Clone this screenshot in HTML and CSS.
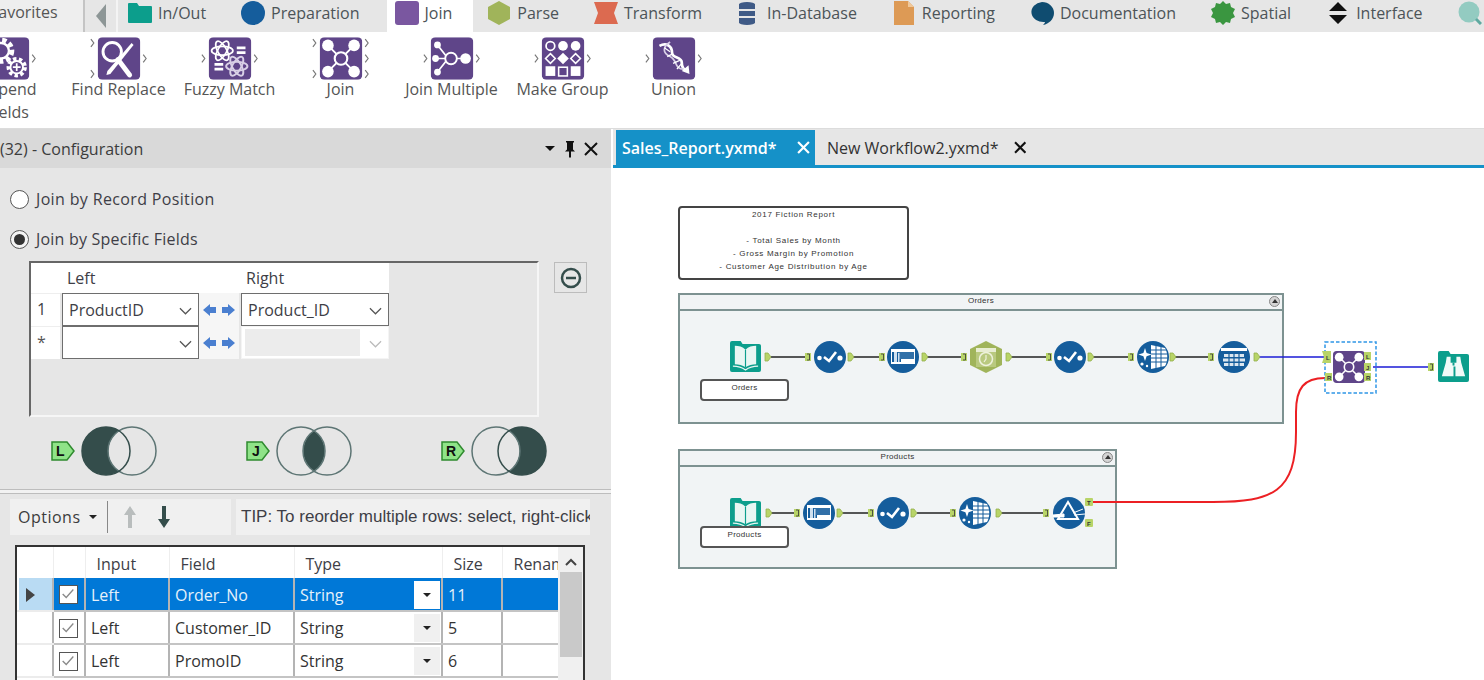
FILE: index.html
```html
<!DOCTYPE html>
<html lang="en">
<head>
    <meta charset="UTF-8">
    <title>Sales_Report.yxmd - Alteryx Designer</title>
    <link rel="stylesheet" href="styles.css">
</head>
<body>
    <svg class="defs" xmlns="http://www.w3.org/2000/svg">
        <!-- ribbon tools: 42x43 purple tiles -->
        <symbol id="tile-append" viewBox="0 0 44 44">
            <rect width="44" height="44" rx="5" fill="#5f4589"/>
            <circle cx="15" cy="14" r="11" fill="none" stroke="#fff" stroke-width="5" stroke-dasharray="4.500 3"/>
            <circle cx="15" cy="14" r="8" fill="none" stroke="#fff" stroke-width="2.500"/>
            <circle cx="31" cy="31" r="8.500" fill="none" stroke="#fff" stroke-width="4" stroke-dasharray="3.500 2.500"/>
            <circle cx="31" cy="31" r="6.500" fill="#5f4589" stroke="#fff" stroke-width="2"/>
            <path d="M31 27v8M27 31h8" stroke="#fff" stroke-width="1.800"/>
        </symbol>
        <symbol id="tile-find" viewBox="0 0 44 44">
            <rect width="44" height="44" rx="5" fill="#5f4589"/>
            <circle cx="15" cy="15" r="9.500" fill="none" stroke="#fff" stroke-width="3"/>
            <path d="M21 23l12 16" stroke="#fff" stroke-width="5" stroke-linecap="round"/>
            <path d="M35 6l2 2-24 30-4 1 1-4z" fill="#fff"/>
        </symbol>
        <symbol id="tile-fuzzy" viewBox="0 0 44 44">
            <rect width="44" height="44" rx="5" fill="#5f4589"/>
            <g fill="none" stroke="#fff" stroke-width="1.800">
                <ellipse cx="14" cy="14" rx="11" ry="4.500"/>
                <ellipse cx="14" cy="14" rx="11" ry="4.500" transform="rotate(60 14 14)"/>
                <ellipse cx="14" cy="14" rx="11" ry="4.500" transform="rotate(120 14 14)"/>
            </g>
            <g fill="none" stroke="#d8cfe6" stroke-width="2">
                <ellipse cx="29" cy="30" rx="11" ry="4.500"/>
                <ellipse cx="29" cy="30" rx="11" ry="4.500" transform="rotate(60 29 30)"/>
                <ellipse cx="29" cy="30" rx="11" ry="4.500" transform="rotate(120 29 30)"/>
            </g>
            <path d="M29 11h9M29 16h9M6 28h9M6 33h9" stroke="#fff" stroke-width="2.800"/>
        </symbol>
        <symbol id="tile-join" viewBox="0 0 44 44">
            <rect width="44" height="44" rx="5" fill="#5f4589"/>
            <path d="M9 9l26 26M35 9L9 35" stroke="#fff" stroke-width="2"/>
            <circle cx="22" cy="22" r="6.500" fill="#5f4589" stroke="#fff" stroke-width="2.200"/>
            <circle cx="8.500" cy="8.500" r="6" fill="#fff"/>
            <circle cx="35.500" cy="8.500" r="6" fill="#fff"/>
            <circle cx="8.500" cy="35.500" r="6" fill="#fff"/>
            <circle cx="35.500" cy="35.500" r="6" fill="#fff"/>
        </symbol>
        <symbol id="tile-multi" viewBox="0 0 44 44">
            <rect width="44" height="44" rx="5" fill="#5f4589"/>
            <path d="M7 8l11 14M5 22h13M7 36l11-14M27 22h7" stroke="#fff" stroke-width="1.800"/>
            <circle cx="7" cy="8" r="3.500" fill="#fff"/>
            <circle cx="5" cy="22" r="3.500" fill="#fff"/>
            <circle cx="7" cy="36" r="3.500" fill="#fff"/>
            <circle cx="21" cy="22" r="6" fill="#5f4589" stroke="#fff" stroke-width="2"/>
            <circle cx="36" cy="22" r="5.500" fill="#fff"/>
        </symbol>
        <symbol id="tile-group" viewBox="0 0 44 44">
            <rect width="44" height="44" rx="5" fill="#5f4589"/>
            <circle cx="9" cy="9" r="4.500" fill="none" stroke="#fff" stroke-width="1.800"/>
            <circle cx="22" cy="9" r="5" fill="#fff"/>
            <circle cx="35" cy="9" r="5" fill="#fff"/>
            <path d="M9 17l5 5-5 5-5-5z" fill="none" stroke="#fff" stroke-width="1.600"/>
            <path d="M22 16l6 6-6 6-6-6z" fill="#fff"/>
            <path d="M35 17l5 5-5 5-5-5z" fill="none" stroke="#fff" stroke-width="1.600"/>
            <rect x="4" y="30" width="10" height="10" fill="#fff"/>
            <rect x="17.500" y="31" width="9" height="9" fill="none" stroke="#fff" stroke-width="1.600"/>
            <rect x="30" y="30" width="10" height="10" fill="#fff"/>
        </symbol>
        <symbol id="tile-union" viewBox="0 0 44 44">
            <rect width="44" height="44" rx="5" fill="#5f4589"/>
            <path d="M7 9c8-4 13 1 13 7s10 4 10 10 3 8 5 9" fill="none" stroke="#fff" stroke-width="2.800"/>
            <path d="M18 5c-8 5-8 11 0 15s4 13 14 13" fill="none" stroke="#d8cfe6" stroke-width="1.800"/>
            <path d="M12 11l6 4M15 20l6-3M21 27l7-3M25 33l5-6" stroke="#fff" stroke-width="1.300"/>
            <path d="M38 38l-1-9-7 6z" fill="#fff"/>
        </symbol>

        <!-- workflow tools, 32px -->
        <symbol id="wf-book" viewBox="0 0 32 32">
            <path d="M2 0h9l2 3h17a2 2 0 0 1 2 2v25a2 2 0 0 1-2 2H2a2 2 0 0 1-2-2V2a2 2 0 0 1 2-2z" fill="#0c9e8c"/>
            <path d="M16 9C13 6 9 5 5 5v19c4 0 8 1 11 3 3-2 7-3 11-3V5c-4 0-8 1-11 4z" fill="#e8f6f3"/>
            <path d="M16 9v18" stroke="#0c9e8c" stroke-width="1.200"/>
            <path d="M3 26c4 0 9 1 13 4 4-3 9-4 13-4" fill="none" stroke="#e8f6f3" stroke-width="1.200"/>
        </symbol>
        <symbol id="wf-select" viewBox="0 0 32 32">
            <circle cx="16" cy="16" r="16" fill="#155d9c"/>
            <circle cx="5.500" cy="17" r="2.300" fill="#fff"/>
            <path d="M10 16l5 4 7-9" fill="none" stroke="#fff" stroke-width="2.600"/>
            <circle cx="26" cy="17" r="2.600" fill="#fff"/>
        </symbol>
        <symbol id="wf-formula" viewBox="0 0 32 32">
            <circle cx="16" cy="16" r="16" fill="#155d9c"/>
            <rect x="4" y="8" width="24" height="15" fill="#fff"/>
            <rect x="5" y="11" width="22" height="10" fill="#155d9c"/>
            <rect x="11" y="11" width="16" height="7" fill="#fff" opacity=".12"/>
            <path d="M7 21V11h3v10zM11 21v-9h1.500v9z" fill="#cfe0ef"/>
            <path d="M14 18h13v3H14z" fill="#fff"/>
        </symbol>
        <symbol id="wf-date" viewBox="0 0 32 32">
            <path d="M16 0l16 8v16l-16 8-16-8V8z" fill="#a0b45a"/>
            <rect x="6" y="7" width="20" height="4" fill="#e8edd2"/>
            <rect x="6" y="11" width="20" height="15" fill="#b9c97f"/>
            <circle cx="16" cy="18" r="6.500" fill="none" stroke="#eef2dc" stroke-width="1.500"/>
            <path d="M16 14v4l-2 3" fill="none" stroke="#eef2dc" stroke-width="1.200"/>
        </symbol>
        <symbol id="wf-multi" viewBox="0 0 32 32">
            <circle cx="16" cy="16" r="16" fill="#155d9c"/>
            <path d="M14 4l14 3c3 5 3 13 0 18l-14 3z" fill="#fff"/>
            <path d="M14 9h16M14 13h17M14 17h17M14 21h16M19 5v23M24 6v21" stroke="#155d9c" stroke-width="1"/>
            <path d="M8 7l1.600 5 5 1.600-5 1.600L8 20l-1.600-4.800-5-1.600 5-1.600z" fill="#fff"/>
            <circle cx="5" cy="23" r="1.600" fill="#fff"/>
            <circle cx="10" cy="25" r="1.200" fill="#fff"/>
        </symbol>
        <symbol id="wf-grid" viewBox="0 0 32 32">
            <circle cx="16" cy="16" r="16" fill="#155d9c"/>
            <rect x="3" y="7" width="26" height="3" fill="#fff"/>
            <path d="M6 13h20v3H6zM5 17.500h22v3H5zM6 22h20v3H6z" fill="#fff" opacity=".85"/>
            <path d="M11 12v14M16 12v14M21 12v14" stroke="#155d9c" stroke-width="1.200"/>
        </symbol>
        <symbol id="wf-filter" viewBox="0 0 32 32">
            <circle cx="16" cy="16" r="16" fill="#155d9c"/>
            <path d="M15 5l10 17H5z" fill="none" stroke="#fff" stroke-width="2"/>
            <path d="M0 18l11-1v3H0zM20 16l10-4M21 18l11-1" stroke="#fff" fill="#fff" stroke-width="1"/>
        </symbol>
        <symbol id="wf-browse" viewBox="0 0 32 32">
            <path d="M2 0h9l2 3h17a2 2 0 0 1 2 2v25a2 2 0 0 1-2 2H2a2 2 0 0 1-2-2V2a2 2 0 0 1 2-2z" fill="#0c9e8c"/>
            <path d="M9 6h4v6h6V6h4l1 6 4 14h-10V16h-2v10H4l4-14z" fill="#f1faf8"/>
            <path d="M15 12h2v3h-2z" fill="#0c9e8c"/>
        </symbol>
    </svg>

    <nav class="cat-bar">
        <div class="fav">Favorites</div>
        <div class="cat-back"><span class="back-arrow"></span></div>
        <div class="cats">
            <div class="cat">
                <svg class="cat-icon" viewBox="0 0 24 24"><path d="M1 2h8l2 3h12a1 1 0 0 1 1 1v15a1 1 0 0 1-1 1H1a1 1 0 0 1-1-1V3a1 1 0 0 1 1-1z" fill="#0c9e8c"/></svg>
                <span>In/Out</span>
            </div>
            <div class="cat">
                <svg class="cat-icon" viewBox="0 0 24 24"><circle cx="12" cy="12" r="12" fill="#155d9c"/></svg>
                <span>Preparation</span>
            </div>
            <div class="cat cat-active">
                <svg class="cat-icon" viewBox="0 0 24 24"><rect width="24" height="24" rx="3" fill="#7a57a0"/></svg>
                <span>Join</span>
            </div>
            <div class="cat">
                <svg class="cat-icon" viewBox="0 0 24 24"><path d="M12 0l11 6v12l-11 6-11-6V6z" fill="#a0b45a"/></svg>
                <span>Parse</span>
            </div>
            <div class="cat">
                <svg class="cat-icon" viewBox="0 0 24 24"><path d="M0 1h24l-4 11 4 11H0l4-11z" fill="#dc6a50"/></svg>
                <span>Transform</span>
            </div>
            <div class="cat">
                <svg class="cat-icon" viewBox="0 0 24 24"><path d="M2 3h16v5H2zM2 10h16v5H2zM2 17h16v5H2z" fill="#3f5a86"/><ellipse cx="10" cy="3.500" rx="8" ry="2.500" fill="#3f5a86"/><ellipse cx="10" cy="21.500" rx="8" ry="2.500" fill="#3f5a86"/></svg>
                <span>In-Database</span>
            </div>
            <div class="cat">
                <svg class="cat-icon" viewBox="0 0 24 24"><path d="M2 0h14l6 6v18H2z" fill="#dd9a55"/><path d="M16 0v6h6z" fill="#f0c89a"/></svg>
                <span>Reporting</span>
            </div>
            <div class="cat">
                <svg class="cat-icon" viewBox="0 0 24 24"><path d="M12 1a12 11 0 0 1 12 11c0 6-5 11-11 12 2-2 2-3 2-3A12 10 0 1 1 12 1z" fill="#0f4c70"/></svg>
                <span>Documentation</span>
            </div>
            <div class="cat">
                <svg class="cat-icon" viewBox="0 0 24 24"><path d="M12 0l3 3 4-1 1 4 4 2-2 4 2 4-4 2-1 4-4-1-3 3-3-3-4 1-1-4-4-2 2-4-2-4 4-2 1-4 4 1z" fill="#3a9640"/></svg>
                <span>Spatial</span>
            </div>
            <div class="cat">
                <svg class="cat-icon" viewBox="0 0 24 24"><path d="M12 1l9 9H3zM3 14h18l-9 9z" fill="#111"/></svg>
                <span>Interface</span>
            </div>
            <div class="cat">
                <svg class="cat-icon" viewBox="0 0 24 24"><circle cx="11" cy="11" r="10.500" fill="#93cbc1"/><path d="M18 18l5 5" stroke="#5fa9a0" stroke-width="3"/></svg>
            </div>
        </div>
    </nav>

    <section class="ribbon">
        <div class="tool">
            <svg class="tool-svg" viewBox="-10 0 64 44"><use href="#tile-append" width="44" height="44"/><path class="chev" d="M47 18l3 4-3 4"/></svg>
            <span class="tool-label">Append Fields</span>
        </div>
        <div class="tool">
            <svg class="tool-svg" viewBox="-10 0 64 44"><use href="#tile-find" width="44" height="44"/><path class="chev" d="M-7 2l3 4-3 4M-7 34l3 4-3 4M47 18l3 4-3 4"/></svg>
            <span class="tool-label">Find Replace</span>
        </div>
        <div class="tool">
            <svg class="tool-svg" viewBox="-10 0 64 44"><use href="#tile-fuzzy" width="44" height="44"/><path class="chev" d="M-7 18l3 4-3 4M47 18l3 4-3 4"/></svg>
            <span class="tool-label">Fuzzy Match</span>
        </div>
        <div class="tool">
            <svg class="tool-svg" viewBox="-10 0 64 44"><use href="#tile-join" width="44" height="44"/><path class="chev" d="M-7 2l3 4-3 4M-7 34l3 4-3 4M47 2l3 4-3 4M47 18l3 4-3 4M47 34l3 4-3 4"/></svg>
            <span class="tool-label">Join</span>
        </div>
        <div class="tool">
            <svg class="tool-svg" viewBox="-10 0 64 44"><use href="#tile-multi" width="44" height="44"/><path class="chev" d="M-7 18l3 4-3 4M47 18l3 4-3 4"/></svg>
            <span class="tool-label">Join Multiple</span>
        </div>
        <div class="tool">
            <svg class="tool-svg" viewBox="-10 0 64 44"><use href="#tile-group" width="44" height="44"/><path class="chev" d="M-7 18l3 4-3 4M47 18l3 4-3 4"/></svg>
            <span class="tool-label">Make Group</span>
        </div>
        <div class="tool">
            <svg class="tool-svg" viewBox="-10 0 64 44"><use href="#tile-union" width="44" height="44"/><path class="chev" d="M-7 18l3 4-3 4M47 18l3 4-3 4"/></svg>
            <span class="tool-label">Union</span>
        </div>
    </section>

    <main class="main">
        <aside class="config">
            <header class="config-head">
                <span class="config-title">(32) - Configuration</span>
                <svg class="config-ctrls" viewBox="0 0 54 18">
                    <path d="M0 6h10l-5 5z" fill="#111"/>
                    <path d="M21 1h8v1.500h-1v7l2 2h-4v6h-2v-6h-4l2-2v-7h-1z" fill="#111"/>
                    <path d="M40 3l12 12M52 3L40 15" stroke="#111" stroke-width="2"/>
                </svg>
            </header>

            <label class="radio radio-first"><span class="radio-dot"></span>Join by Record Position</label>
            <label class="radio radio-next"><span class="radio-dot radio-on"></span>Join by Specific Fields</label>

            <div class="fields-row">
                <div class="join-box">
                    <div class="join-grid">
                        <div class="jg-cell"></div>
                        <div class="jg-cell jg-head">Left</div>
                        <div class="jg-cell"></div>
                        <div class="jg-cell jg-head">Right</div>

                        <div class="jg-num">1</div>
                        <div class="select">ProductID<svg class="chevron" viewBox="0 0 14 8"><path d="M1 1l6 6 6-6"/></svg></div>
                        <div class="swap"><svg class="swap-icon" viewBox="0 0 32 14"><path d="M0 7l7-6v3h6v6H7v3zM32 7l-7-6v3h-6v6h6v3z" fill="#4a7fd0"/></svg></div>
                        <div class="select">Product_ID<svg class="chevron" viewBox="0 0 14 8"><path d="M1 1l6 6 6-6"/></svg></div>

                        <div class="jg-num jg-star">*</div>
                        <div class="select"><svg class="chevron" viewBox="0 0 14 8"><path d="M1 1l6 6 6-6"/></svg></div>
                        <div class="swap"><svg class="swap-icon" viewBox="0 0 32 14"><path d="M0 7l7-6v3h6v6H7v3zM32 7l-7-6v3h-6v6h6v3z" fill="#4a7fd0"/></svg></div>
                        <div class="select select-off"><span class="select-fill"></span><svg class="chevron" viewBox="0 0 14 8"><path d="M1 1l6 6 6-6"/></svg></div>
                    </div>
                </div>
                <button class="minus-btn"><svg class="minus-icon" viewBox="0 0 22 22"><circle cx="11" cy="11" r="9" fill="none" stroke="#344d4b" stroke-width="2.500"/><path d="M6 11h10" stroke="#344d4b" stroke-width="2.500"/></svg></button>
            </div>

            <div class="venn-row">
                <div class="venn">
                    <svg class="tag" viewBox="0 0 24 20"><path d="M1 1h15l7 9-7 9H1z" fill="#8fe388" stroke="#2f8a2f" stroke-width="1.500"/><text class="tag-text" x="5" y="15">L</text></svg>
                    <svg class="venn-svg" viewBox="0 0 76 50">
                        <path d="M25 1a24 24 0 0 1 13 4 24 24 0 0 0 0 40 24 24 0 0 1-13 4 24 24 0 0 1 0-48z" fill="#344d4b"/>
                        <circle cx="51" cy="25" r="24" fill="none" stroke="#5d7574" stroke-width="1.500"/>
                        <circle cx="25" cy="25" r="24" fill="none" stroke="#344d4b" stroke-width="1.500"/>
                    </svg>
                </div>
                <div class="venn">
                    <svg class="tag" viewBox="0 0 24 20"><path d="M1 1h15l7 9-7 9H1z" fill="#8fe388" stroke="#2f8a2f" stroke-width="1.500"/><text class="tag-text" x="6" y="15">J</text></svg>
                    <svg class="venn-svg" viewBox="0 0 76 50">
                        <path d="M38 5a24 24 0 0 1 0 40 24 24 0 0 1 0-40z" fill="#344d4b"/>
                        <circle cx="25" cy="25" r="24" fill="none" stroke="#5d7574" stroke-width="1.500"/>
                        <circle cx="51" cy="25" r="24" fill="none" stroke="#5d7574" stroke-width="1.500"/>
                    </svg>
                </div>
                <div class="venn">
                    <svg class="tag" viewBox="0 0 24 20"><path d="M1 1h15l7 9-7 9H1z" fill="#8fe388" stroke="#2f8a2f" stroke-width="1.500"/><text class="tag-text" x="5" y="15">R</text></svg>
                    <svg class="venn-svg" viewBox="0 0 76 50">
                        <path d="M51 1a24 24 0 0 0-13 4 24 24 0 0 1 0 40 24 24 0 0 0 13 4 24 24 0 0 0 0-48z" fill="#344d4b"/>
                        <circle cx="25" cy="25" r="24" fill="none" stroke="#5d7574" stroke-width="1.500"/>
                        <circle cx="51" cy="25" r="24" fill="none" stroke="#344d4b" stroke-width="1.500"/>
                    </svg>
                </div>
            </div>

            <div class="split-line"></div>

            <div class="toolbar-row">
                <div class="toolbar">
                    <span class="options">Options</span>
                    <span class="caret"></span>
                    <span class="tb-sep"></span>
                    <svg class="tb-arrow" viewBox="0 0 14 24"><path d="M7 1l6 9H9v13H5V10H1z" fill="#b9bdbd"/></svg>
                    <svg class="tb-arrow" viewBox="0 0 14 24"><path d="M5 1h4v13h4l-6 9-6-9h4z" fill="#344d4b"/></svg>
                </div>
                <div class="tip">TIP: To reorder multiple rows: select, right-click</div>
            </div>

            <div class="fields-wrap">
                <table class="fields">
                    <colgroup>
                        <col class="c-head"><col class="c-check"><col class="c-input"><col class="c-field"><col class="c-type"><col class="c-size"><col class="c-rename">
                    </colgroup>
                    <thead>
                        <tr><th></th><th></th><th>Input</th><th>Field</th><th>Type</th><th>Size</th><th>Rename</th></tr>
                    </thead>
                    <tbody>
                        <tr class="row-sel">
                            <td class="row-head"><span class="row-arrow"></span></td>
                            <td><span class="check"><svg viewBox="0 0 18 18"><path d="M3 9l4 4 8-9" fill="none" stroke="#8a8a8a" stroke-width="1.500"/></svg></span></td>
                            <td>Left</td><td>Order_No</td>
                            <td><div class="type-cell">String<span class="type-drop"><i class="caret"></i></span></div></td>
                            <td>11</td><td></td>
                        </tr>
                        <tr>
                            <td class="row-head"></td>
                            <td><span class="check"><svg viewBox="0 0 18 18"><path d="M3 9l4 4 8-9" fill="none" stroke="#8a8a8a" stroke-width="1.500"/></svg></span></td>
                            <td>Left</td><td>Customer_ID</td>
                            <td><div class="type-cell">String<span class="type-drop"><i class="caret"></i></span></div></td>
                            <td>5</td><td></td>
                        </tr>
                        <tr>
                            <td class="row-head"></td>
                            <td><span class="check"><svg viewBox="0 0 18 18"><path d="M3 9l4 4 8-9" fill="none" stroke="#8a8a8a" stroke-width="1.500"/></svg></span></td>
                            <td>Left</td><td>PromoID</td>
                            <td><div class="type-cell">String<span class="type-drop"><i class="caret"></i></span></div></td>
                            <td>6</td><td></td>
                        </tr>
                    </tbody>
                </table>
                <div class="scroll">
                    <svg class="scroll-up" viewBox="0 0 12 8"><path d="M1 7l5-5 5 5" fill="none" stroke="#444" stroke-width="2"/></svg>
                    <div class="scroll-thumb"></div>
                </div>
            </div>
        </aside>

        <section class="work">
            <div class="doc-tabs">
                <div class="doc-tab doc-active">
                    <span>Sales_Report.yxmd*</span>
                    <svg class="doc-x" viewBox="0 0 12 12"><path d="M1 1l10 10M11 1L1 11" stroke="#fff" stroke-width="2"/></svg>
                </div>
                <div class="doc-tab">
                    <span>New Workflow2.yxmd*</span>
                    <svg class="doc-x" viewBox="0 0 12 12"><path d="M1 1l10 10M11 1L1 11" stroke="#111" stroke-width="2"/></svg>
                </div>
            </div>

            <div class="canvas">
                <div class="comment">
                    <p>2017 Fiction Report</p>
                    <p class="comment-gap">- Total Sales by Month</p>
                    <p>- Gross Margin by Promotion</p>
                    <p>- Customer Age Distribution by Age</p>
                </div>

                <div class="box box-orders">
                    <div class="box-head">Orders<span class="collapse"></span></div>
                </div>
                <div class="box box-products">
                    <div class="box-head">Products<span class="collapse"></span></div>
                </div>

                <div class="node-label label-orders">Orders</div>
                <div class="node-label label-products">Products</div>

                <!-- viewBox uses page coordinates -->
                <svg class="flow" viewBox="613 168 871 512">
                    <defs>
                        <path id="out-a" d="M0-4h3l3 4-3 4H0z" fill="#b8d468" stroke="#94b04c" stroke-width=".8"/>
                        <g id="in-a"><path d="M0-4h6v8H0z" fill="#b8d468"/><path d="M2-3h2.500v6H2" fill="none" stroke="#333" stroke-width=".8"/></g>
                    </defs>

                    <g class="wire">
                        <path d="M771 357h34M853 357h26M927 357h34M1011 357h35M1093 357h35M1175 357h33"/>
                        <path d="M771 513h23M842 513h26M917 513h33M1001 513h42"/>
                    </g>
                    <path class="wire-blue" d="M1259 357h65M1373 367h55"/>
                    <path class="wire-red" d="M1093 502h120c60 0 83-10 83-70v-20c0-24 8-34 29-34"/>

                    <use href="#wf-book" x="730" y="341" width="31" height="31"/>
                    <use href="#wf-select" x="814" y="341" width="32" height="32"/>
                    <use href="#wf-formula" x="887" y="341" width="32" height="32"/>
                    <use href="#wf-date" x="970" y="341" width="32" height="32"/>
                    <use href="#wf-select" x="1054" y="341" width="32" height="32"/>
                    <use href="#wf-multi" x="1137" y="341" width="32" height="32"/>
                    <use href="#wf-grid" x="1218" y="341" width="32" height="32"/>

                    <use href="#wf-book" x="730" y="498" width="31" height="31"/>
                    <use href="#wf-formula" x="803" y="497" width="32" height="32"/>
                    <use href="#wf-select" x="877" y="497" width="32" height="32"/>
                    <use href="#wf-multi" x="959" y="497" width="32" height="32"/>
                    <use href="#wf-filter" x="1053" y="497" width="32" height="32"/>

                    <use href="#out-a" x="765" y="357"/><use href="#in-a" x="805" y="357"/>
                    <use href="#out-a" x="848" y="357"/><use href="#in-a" x="879" y="357"/>
                    <use href="#out-a" x="922" y="357"/><use href="#in-a" x="961" y="357"/>
                    <use href="#out-a" x="1006" y="357"/><use href="#in-a" x="1046" y="357"/>
                    <use href="#out-a" x="1088" y="357"/><use href="#in-a" x="1128" y="357"/>
                    <use href="#out-a" x="1170" y="357"/><use href="#in-a" x="1208" y="357"/>
                    <use href="#out-a" x="1254" y="357"/>

                    <use href="#out-a" x="766" y="513"/><use href="#in-a" x="794" y="513"/>
                    <use href="#out-a" x="837" y="513"/><use href="#in-a" x="868" y="513"/>
                    <use href="#out-a" x="911" y="513"/><use href="#in-a" x="950" y="513"/>
                    <use href="#out-a" x="996" y="513"/><use href="#in-a" x="1043" y="513"/>

                    <g class="mini-anchor">
                        <rect x="1085" y="498" width="8" height="8" rx="1"/><text x="1087" y="504.500">T</text>
                        <rect x="1085" y="519" width="8" height="8" rx="1"/><text x="1087" y="525.500">F</text>
                    </g>

                    <!-- selected join -->
                    <rect class="select-dash" x="1325" y="342" width="51" height="51"/>
                    <use href="#tile-join" x="1333" y="351" width="32" height="32"/>
                    <g class="mini-anchor">
                        <path d="M1322 351h9v12h-9l2-6z"/><text x="1326" y="360">L</text>
                        <rect x="1325" y="373" width="7" height="8"/><text x="1327" y="379.500">R</text>
                        <rect x="1364" y="352" width="7" height="8"/><text x="1366" y="358.500">L</text>
                        <rect x="1364" y="363" width="7" height="8"/><text x="1366" y="369.500">J</text>
                        <rect x="1364" y="373" width="7" height="8"/><text x="1366" y="379.500">R</text>
                    </g>

                    <use href="#in-a" x="1428" y="367"/>
                    <use href="#wf-browse" x="1438" y="351" width="31" height="31"/>
                </svg>
            </div>
        </section>
    </main>
</body>
</html>
```

FILE: styles.css
```css
* { box-sizing: border-box; }
html, body { margin: 0; padding: 0; }
body { width: 1484px; height: 680px; overflow: hidden; background: #fff; font-family: "Open Sans", "Noto Sans", sans-serif; font-size: 16px; color: #3c3c3c; }
.defs { display: none; }

/* category bar */
.cat-bar { display: flex; height: 32px; background: #e6e6e6; }
.fav { flex: none; width: 95px; margin-left: -10px; line-height: 25px; background: #eeeeee; border-right: 2px solid #c4c4c4; color: #555; }
.cat-back { flex: none; width: 33px; display: flex; align-items: center; justify-content: center; border-right: 2px solid #f4f4f4; background: #e6e6e6; }
.back-arrow { width: 0; height: 0; border-top: 12px solid transparent; border-bottom: 12px solid transparent; border-right: 10px solid #8d9696; }
.cats { display: flex; flex: none; gap: 19px; margin-left: 2px; }
.cat { display: flex; align-items: center; gap: 6px; padding: 0 8px 6px; height: 32px; color: #4c5458; white-space: nowrap; }
.cat-active { background: #fff; padding-right: 21px; margin-right: -13px; }
.cat-icon { width: 24px; height: 24px; flex: none; }

/* ribbon */
.ribbon { display: flex; height: 97px; margin-left: -48px; padding-top: 5px; background: #fff; border-bottom: 1px solid #dcdcdc; }
.tool { width: 111px; display: flex; flex-direction: column; align-items: center; text-align: center; }
.tool-svg { width: 62px; height: 43px; flex: none; }
.tool-label { width: 90px; margin-top: -2px; line-height: 23px; color: #555; white-space: normal; }
.tool:not(:first-child) .tool-label { width: 111px; white-space: nowrap; }
.chev { fill: none; stroke: #777; stroke-width: 1.200; }

.main { display: flex; height: 551px; }

/* configuration panel */
.config { width: 611px; flex: none; background: #e6e6e6; overflow: hidden; }
.config-head { display: flex; align-items: center; justify-content: space-between; height: 39px; padding-right: 12px; background: #d9d9d9; color: #3c3c3c; }
.config-ctrls { width: 54px; height: 18px; }
.radio { display: flex; align-items: center; gap: 7px; height: 20px; margin-left: 10px; color: #3e3e46; }
.radio-first { margin-top: 21px; letter-spacing: .35px; }
.radio-next { margin-top: 20px; letter-spacing: .2px; }
.radio-dot { width: 19px; height: 19px; border: 1.500px solid #555; border-radius: 50%; background: #fff; display: flex; align-items: center; justify-content: center; }
.radio-on { background: #f4f4f4; }
.radio-on::after { content: ""; width: 11px; height: 11px; border-radius: 50%; background: #333; }

.fields-row { display: flex; gap: 15px; margin: 12px 0 0 29px; }
.join-box { width: 510px; height: 156px; border-top: 2px solid #666; border-left: 2px solid #666; border-right: 2px solid #f6f6f6; border-bottom: 2px solid #f6f6f6; }
.join-grid { display: grid; grid-template-columns: 29px 139px 40px 150px; grid-template-rows: 30px 33px 33px; width: 358px; }
.jg-cell { background: #fff; line-height: 30px; }
.jg-cell.jg-head { padding-left: 7px; color: #3e3e46; }
.jg-num { background: #fff; padding-left: 6px; line-height: 30px; color: #3e3e46; border-top: 1px solid #eee; }
.jg-star { color: #555; }
.select { position: relative; display: flex; align-items: center; padding-left: 6px; margin: 0 0 0 2px; background: #fff; border: 1.500px solid #6e6e6e; color: #3e3e46; }
.select-off { border: 1.500px solid #f4f4f4; padding: 0 28px 0 3px; }
.select-fill { display: block; width: 100%; height: 27px; background: #ececec; }
.chevron { position: absolute; right: 6px; top: 13px; width: 13px; height: 8px; fill: none; stroke: #555; stroke-width: 1.300; }
.select-off .chevron { stroke: #bbb; }
.swap { display: flex; align-items: center; justify-content: center; background: #f6f6f6; }
.swap-icon { width: 32px; height: 14px; }
.minus-btn { width: 33px; height: 31px; margin-top: 1px; padding: 0; display: flex; align-items: center; justify-content: center; background: #e6e6e6; border: 1px solid #bcbcbc; }
.minus-icon { width: 22px; height: 22px; }

.venn-row { display: flex; margin: 9px 0 0 51px; }
.venn { display: flex; flex: none; align-items: center; gap: 6px; width: 195px; }
.tag { width: 24px; height: 20px; flex: none; }
.tag-text { font: bold 14px "Liberation Sans", sans-serif; fill: #111; }
.venn-svg { width: 76px; height: 50px; flex: none; }

.split-line { height: 5px; margin-top: 13px; border-top: 1px solid #bdbdbd; border-bottom: 1px solid #bdbdbd; background: #f2f2f2; }

.toolbar-row { display: flex; gap: 5px; margin: 5px 0 0 10px; }
.toolbar { display: flex; align-items: center; width: 221px; height: 36px; padding-left: 8px; background: #f0f0f0; }
.options { letter-spacing: .5px; color: #3c3c3c; }
.caret { display: inline-block; width: 0; height: 0; margin-left: 8px; border-left: 4px solid transparent; border-right: 4px solid transparent; border-top: 4px solid #222; }
.tb-sep { width: 1px; height: 32px; margin: 0 15px 0 10px; background: #888; }
.tb-arrow { width: 14px; height: 24px; margin-right: 20px; }
.tip { width: 354px; height: 36px; padding-left: 5px; line-height: 36px; background: #f0f0f0; overflow: hidden; white-space: nowrap; color: #3e3e46; font-family: "Liberation Sans", sans-serif; font-size: 17px; }

.fields-wrap { display: flex; width: 570px; height: 140px; margin: 10px 0 0 15px; border: 2px solid #333; border-bottom: none; background: #fff; }
.fields { width: 541px; flex: none; align-self: flex-start; table-layout: fixed; border-collapse: collapse; }
.c-head { width: 36px; }
.c-check { width: 32px; }
.c-input { width: 84px; }
.c-field { width: 125px; }
.c-type { width: 148px; }
.c-size { width: 60px; }
.c-rename { width: 56px; }
.fields th { height: 31px; padding: 3px 0 0 11px; text-align: left; font-weight: 400; color: #3e3e46; background: #fff; overflow: hidden; white-space: nowrap; border-right: 1px solid #eee; }
.fields td { height: 33px; padding: 1px 0 0 5px; border-right: 2px solid #b4b4b4; border-bottom: 2px solid #c4c4c4; color: #333; overflow: hidden; white-space: nowrap; }
.fields th:last-child, .fields td:last-child { border-right: none; }
.fields tbody td:first-child { border-bottom: 2px solid #ececec; }
.row-sel td { background: #0078d7; color: #e6f1fa; }
.row-sel .row-head { background: linear-gradient(90deg, #fff 2px, #b9dbf3 2px); }
.row-arrow { display: block; width: 0; height: 0; margin-left: 4px; border-top: 7px solid transparent; border-bottom: 7px solid transparent; border-left: 9px solid #444; }
.check { display: block; width: 19px; height: 19px; border: 1.500px solid #555; background: #fff; }
.check svg { display: block; width: 16px; height: 16px; }
.type-cell { display: flex; align-items: center; justify-content: space-between; padding-right: 1px; }
.type-drop { display: flex; align-items: center; justify-content: center; width: 26px; height: 28px; background: #f0f0f0; }
.row-sel .type-drop { background: #fff; }
.type-drop .caret { margin: 0; }
.scroll { position: relative; flex: 1; background: #f0f0f0; }
.scroll-up { position: absolute; left: 7px; top: 11px; width: 12px; height: 8px; }
.scroll-thumb { margin: 25px 1px 0 2px; height: 85px; background: #c9c9c9; }

/* document area */
.work { flex: 1; margin-left: 2px; display: flex; flex-direction: column; }
.doc-tabs { display: flex; height: 39px; padding: 1px 0 0 3px; background: #e6e6e6; border-bottom: 3px solid #1591c8; }
.doc-tab { display: flex; align-items: center; justify-content: space-between; height: 35px; padding: 0 5px 0 6px; color: #333; white-space: nowrap; }
.doc-tab:not(.doc-active) { width: 220px; padding: 0 9px 0 12px; justify-content: flex-start; gap: 15px; }
.doc-active { width: 199px; background: #1591c8; color: #fff; font-weight: 600; }
.doc-x { width: 13px; height: 13px; }

/* workflow canvas */
.canvas { position: relative; flex: 1; background: #fff; overflow: hidden; }
.flow { position: absolute; z-index: 1; left: 0; top: 0; width: 871px; height: 512px; }
.wire { fill: none; stroke: #222; stroke-width: 1.600; }
.wire-blue { fill: none; stroke: #1c1cd6; stroke-width: 1.600; }
.wire-red { fill: none; stroke: #ec2024; stroke-width: 2; }
.select-dash { fill: none; stroke: #2f96e6; stroke-width: 1.500; stroke-dasharray: 3.500 2; }
.mini-anchor rect, .mini-anchor path { fill: #b8d468; }
.mini-anchor text { font: bold 6px "Liberation Sans", sans-serif; fill: #333; }

.comment { position: absolute; left: 65px; top: 38px; width: 231px; height: 74px; background: #fff; border: 2px solid #444; border-radius: 4px; text-align: center; font: 8px/13px "Liberation Sans", sans-serif; letter-spacing: .7px; color: #333; }
.comment p { margin: 0; }
.comment .comment-gap { margin-top: 13px; }
.box { position: absolute; background: #f1f4f5; border: 2px solid #7d9291; }
.box-orders { left: 65px; top: 125px; width: 606px; height: 131px; }
.box-products { left: 65px; top: 281px; width: 439px; height: 120px; }
.box-head { position: relative; height: 16px; border-bottom: 2px solid #7d9291; text-align: center; font: 8px/12px "Liberation Sans", sans-serif; letter-spacing: .3px; color: #333; }
.collapse { position: absolute; right: 2px; top: 1px; width: 11px; height: 11px; border: 1px solid #888; border-radius: 50%; background: #d4d4d4; }
.collapse::after { content: ""; position: absolute; left: 2px; top: 2px; border-left: 3px solid transparent; border-right: 3px solid transparent; border-bottom: 4px solid #333; }
.node-label { position: absolute; z-index: 2; width: 89px; height: 22px; background: #fff; border: 2px solid #555; border-radius: 4px; text-align: center; font: 8px/14px "Liberation Sans", sans-serif; letter-spacing: .3px; color: #333; }
.label-orders { left: 87px; top: 211px; }
.label-products { left: 87px; top: 358px; }
```
